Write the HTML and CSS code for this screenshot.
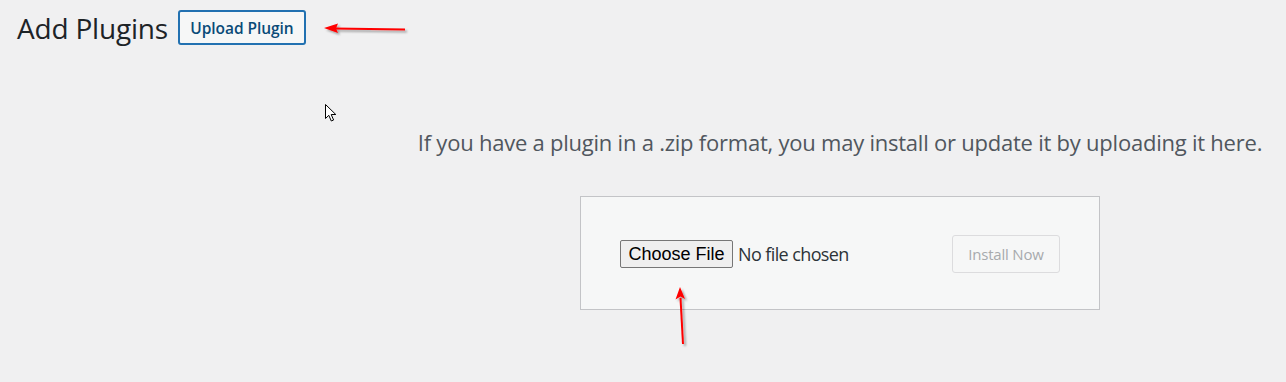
FILE: index.html
```html
<!DOCTYPE html>
<html lang="en">
<head>
<meta charset="utf-8">
<title>Add Plugins</title>
<link rel="stylesheet" href="styles.css">
</head>
<body>
<div class="wrap">
  <div class="page-head">
    <h1 class="page-title">Add Plugins</h1>
    <button class="upload-toggle" type="button">Upload Plugin</button>
  </div>

  <div class="upload-plugin">
    <p class="install-help">If you have a plugin in a .zip format, you may install or update it by uploading it here.</p>
    <form class="upload-form">
      <div class="file-field">
        <span class="file-btn">Choose File</span>
        <span class="file-name">No file chosen</span>
      </div>
      <button class="install-btn" type="button" disabled>Install Now</button>
    </form>
  </div>
</div>

<svg class="anno arrow-left" width="100" height="20" viewBox="0 0 100 20">
  <defs>
    <filter id="sh1" x="-20%" y="-50%" width="140%" height="200%">
      <feDropShadow dx="2" dy="2" stdDeviation="1.2" flood-color="#000" flood-opacity="0.35"/>
    </filter>
  </defs>
  <g filter="url(#sh1)">
    <line x1="22" y1="9.5" x2="93" y2="10.5" stroke="#f00" stroke-width="2"/>
    <polygon points="12,9 26,4.5 24,9.5 26,14" fill="#f00"/>
  </g>
</svg>

<svg class="anno arrow-up" width="24" height="64" viewBox="0 0 24 64">
  <defs>
    <filter id="sh2" x="-50%" y="-20%" width="200%" height="140%">
      <feDropShadow dx="2" dy="2" stdDeviation="1.2" flood-color="#000" flood-opacity="0.35"/>
    </filter>
  </defs>
  <g filter="url(#sh2)">
    <line x1="8.5" y1="14" x2="11" y2="60" stroke="#f00" stroke-width="2"/>
    <polygon points="8,3 13,15 8.5,12.5 3.5,15.5" fill="#f00"/>
  </g>
</svg>

<svg class="anno cursor" width="14" height="20" viewBox="0 0 14 20">
  <path d="M1.5 1.5 L1.5 15.5 L4.8 12.3 L7.3 18 L9.6 17 L7.2 11.5 L11.8 11.5 Z" fill="#fff" stroke="#000" stroke-width="1" stroke-linejoin="miter"/>
</svg>
</body>
</html>
```

FILE: styles.css
```css
html, body {
  margin: 0;
  padding: 0;
}

body {
  background: #f0f0f1;
  font-family: "Open Sans", "Noto Sans", "Liberation Sans", sans-serif;
  color: #3c434a;
  width: 1286px;
  height: 382px;
  overflow: hidden;
  position: relative;
}

.wrap {
  padding: 10px 0 0 17px;
}

.page-head {
  display: flex;
  align-items: center;
  gap: 10px;
  height: 36px;
}

.page-title {
  margin: 0;
  font-size: 28px;
  font-weight: 400;
  color: #1d2327;
  letter-spacing: -0.2px;
  line-height: 36px;
}

.upload-toggle {
  box-sizing: border-box;
  width: 128px;
  height: 35px;
  border: 2px solid #2271b1;
  border-radius: 3px;
  background: #f6f7f7;
  color: #0a4b78;
  font-family: "Open Sans", "Noto Sans", sans-serif;
  font-size: 15.5px;
  font-weight: 600;
  letter-spacing: -0.05px;
  padding: 0;
  margin-top: -1px;
}

.upload-plugin {
  margin-left: 377px;
  display: flex;
  flex-direction: column;
  align-items: center;
}

.install-help {
  margin: 81px 0 0 0;
  font-size: 22px;
  line-height: 30px;
  color: #50575e;
  letter-spacing: -0.23px;
  white-space: nowrap;
}

.upload-form {
  box-sizing: border-box;
  margin-top: 39px;
  width: 520px;
  height: 114px;
  border: 1px solid #c3c4c7;
  background: #f6f7f7;
  padding: 0 39px 0 39px;
  display: flex;
  align-items: center;
  justify-content: space-between;
}

.file-field {
  display: flex;
  align-items: center;
  gap: 5px;
  margin-top: 2px;
}

.file-btn {
  box-sizing: border-box;
  width: 113px;
  height: 28px;
  border: 1px solid #767676;
  border-radius: 2px;
  background: #efefef;
  color: #000;
  font-family: "Liberation Sans", Arial, sans-serif;
  font-size: 18px;
  line-height: 26px;
  text-align: center;
}

.file-name {
  font-size: 18px;
  color: #2c3338;
  letter-spacing: -0.6px;
}

.install-btn {
  box-sizing: border-box;
  width: 108px;
  height: 38px;
  border: 1px solid #dcdcde;
  border-radius: 3px;
  background: #f6f7f7;
  color: #a7aaad;
  font-family: "Open Sans", "Noto Sans", sans-serif;
  font-size: 15px;
  letter-spacing: -0.2px;
  padding: 0;
  margin-top: 2px;
}

.anno {
  position: absolute;
  overflow: visible;
}

.arrow-left {
  left: 312px;
  top: 19px;
}

.arrow-up {
  left: 672px;
  top: 284px;
}

.cursor {
  left: 324px;
  top: 103px;
}
```
